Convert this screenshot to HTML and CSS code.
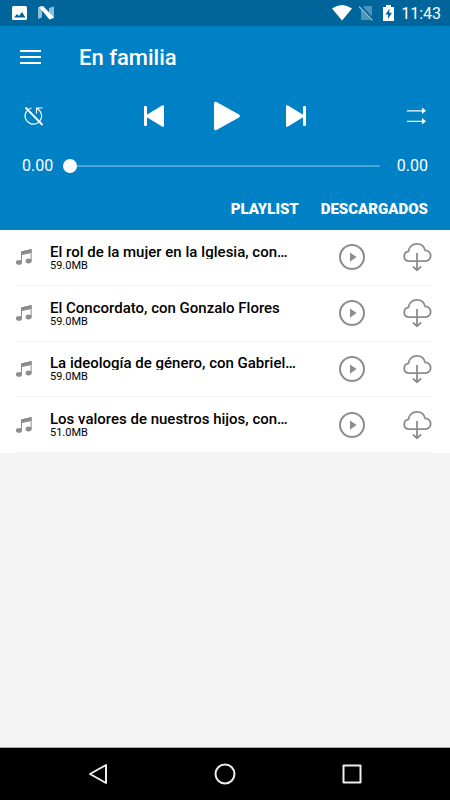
FILE: index.html
```html
<!DOCTYPE html>
<html lang="es">
<head>
<meta charset="utf-8">
<meta name="viewport" content="width=device-width, initial-scale=1">
<title>En familia</title>
<link rel="stylesheet" href="styles.css">
</head>
<body>
<svg class="sprite" aria-hidden="true">
  <symbol id="note" viewBox="0 0 16 16">
    <path d="M5 2.400 15.600 0v12.200h-1V4L6 5.900v7.300H5z"/>
    <path d="M5 2.400 15.600 0v3.800L5 6.100z"/>
    <ellipse cx="3" cy="13.400" rx="3" ry="2.300"/>
    <ellipse cx="12.600" cy="12" rx="3" ry="2.400"/>
  </symbol>
  <symbol id="play-circle" viewBox="0 0 26 26">
    <circle cx="13" cy="13" r="12" fill="none" stroke="currentColor" stroke-width="2"/>
    <path d="M11 8.500v9.200l6.500-4.600z"/>
  </symbol>
  <symbol id="cloud" viewBox="0 0 30 30">
    <g fill="none" stroke="currentColor" stroke-width="1.800">
      <path d="M6.500 19.200A5 5 0 0 1 6.500 9.300C7 5 10.500 1.800 14.800 1.800c4.200 0 7.400 2.700 8.300 6.600a5.400 5.400 0 0 1 .4 10.800z"/>
      <path d="M15 11v17M11 24.500l4 3.800 4-3.800"/>
    </g>
  </symbol>
</svg>
<div class="screen">
  <div class="status">
    <div class="status-group">
      <svg width="15" height="14" viewBox="0 0 15 14"><rect width="15" height="14" rx="1.500" fill="#fff"/><path d="M2 11.500 5 8l2 2 3-4 3.500 5.500z" fill="#00659b"/></svg>
      <svg width="17" height="14" viewBox="0 0 17 14"><path d="M1 1.500 5 0v11.500L1 13zM12 2l5-1.500V12l-5 1.500z" fill="#8fbdd6"/><path d="M2 1l4-1 11 11.500-4.500 2z" fill="#fff"/></svg>
    </div>
    <div class="status-group signals">
      <svg width="20" height="16" viewBox="0 0 20 16"><path d="M0 3.500Q10-3.500 20 3.500L10 15.500z" fill="#fff"/></svg>
      <svg width="15" height="16" viewBox="0 0 15 16"><path d="M5 1h8v14H2V4z" fill="#4c94ba"/><path d="M1 1l13 14" stroke="#00659b" stroke-width="3"/><path d="M0 1.500 13.500 15.500" stroke="#8fbdd6" stroke-width="1.300"/></svg>
      <svg width="13" height="16" viewBox="-2 0 13 16"><path d="M3 0h5v2h3v14H0V2h3z" fill="#fff"/><path d="M6.500 3.500 2.500 9.500H5V14l4-6.200H6.200z" fill="#00659b"/></svg>
      <span class="clock">11:43</span>
    </div>
  </div>
  <header class="player">
    <div class="titlebar">
      <button aria-label="Menú"><svg width="21" height="16" viewBox="0 0 21 16"><path d="M0 2h21M0 8h21M0 14h21" stroke="#fff" stroke-width="2"/></svg></button>
      <h1>En familia</h1>
    </div>
    <div class="controls">
      <button aria-label="Repetir"><svg width="20" height="20" viewBox="0 0 20 20" fill="none" stroke="#fff"><path d="M7.500 2A8.200 8.200 0 1 0 16 5.200L12.800 2M12.500 7.500V2h6" stroke-width="1.200"/><path d="M1.500 1.500l17 17.500" stroke-width="1.800"/></svg></button>
      <div class="transport">
        <button aria-label="Anterior"><svg width="20" height="22" viewBox="0 0 20 22" fill="#fff"><rect width="3" height="20" y="1" rx="1"/><path d="M2.500 10 18 .4Q20-.4 20 1.500v19q0 2-2 1.100L2.500 12z"/></svg></button>
        <button aria-label="Reproducir"><svg width="30" height="30" viewBox="-4 0 30 30" fill="#fff"><path d="M0 2.500Q0 0 2.500 1L25 13.500q1.800 1.500 0 3L2.500 29Q0 30 0 27.500z"/></svg></button>
        <button aria-label="Siguiente"><svg width="20" height="22" viewBox="0 0 20 22" fill="#fff"><rect x="17" y="1" width="3" height="20" rx="1"/><path d="M17.500 10 2 .4Q0-.4 0 1.500v19q0 2 2 1.100L17.500 12z"/></svg></button>
      </div>
      <button aria-label="Orden"><svg width="20" height="18" viewBox="0 0 20 18" fill="#fff"><path d="M1 3.200h15V.5L20 3.700l-4 3.200V4.400H1zM1 13.800h15v-2.700l4 3.200-4 3.200V15H1z"/></svg></button>
    </div>
    <div class="progress">
      <span>0.00</span>
      <input type="range" min="0" max="100" value="0" aria-label="Posición">
      <span>0.00</span>
    </div>
    <nav class="tabs">
      <button>PLAYLIST</button>
      <button>DESCARGADOS</button>
    </nav>
  </header>
  <main>
    <ul class="tracks">
      <li>
        <svg class="note"><use href="#note"/></svg>
        <div class="info"><div class="name">El rol de la mujer en la Iglesia, con…</div><div class="size">59.0MB</div></div>
        <button aria-label="Reproducir"><svg class="play"><use href="#play-circle"/></svg></button>
        <button aria-label="Descargar"><svg class="cloud"><use href="#cloud"/></svg></button>
      </li>
      <li>
        <svg class="note"><use href="#note"/></svg>
        <div class="info"><div class="name">El Concordato, con Gonzalo Flores</div><div class="size">59.0MB</div></div>
        <button aria-label="Reproducir"><svg class="play"><use href="#play-circle"/></svg></button>
        <button aria-label="Descargar"><svg class="cloud"><use href="#cloud"/></svg></button>
      </li>
      <li>
        <svg class="note"><use href="#note"/></svg>
        <div class="info"><div class="name">La ideología de género, con Gabriel…</div><div class="size">59.0MB</div></div>
        <button aria-label="Reproducir"><svg class="play"><use href="#play-circle"/></svg></button>
        <button aria-label="Descargar"><svg class="cloud"><use href="#cloud"/></svg></button>
      </li>
      <li>
        <svg class="note"><use href="#note"/></svg>
        <div class="info"><div class="name">Los valores de nuestros hijos, con…</div><div class="size">51.0MB</div></div>
        <button aria-label="Reproducir"><svg class="play"><use href="#play-circle"/></svg></button>
        <button aria-label="Descargar"><svg class="cloud"><use href="#cloud"/></svg></button>
      </li>
    </ul>
  </main>
  <nav class="system">
    <button aria-label="Atrás"><svg viewBox="0 0 22 22"><path d="M19 2v18L3 11z"/></svg></button>
    <button aria-label="Inicio"><svg viewBox="0 0 22 22"><circle cx="11" cy="11" r="9.500"/></svg></button>
    <button aria-label="Recientes"><svg viewBox="0 0 22 22"><rect x="2.500" y="2.500" width="17" height="17"/></svg></button>
  </nav>
</div>
</body>
</html>
```
FILE: styles.css
```css
* { box-sizing: border-box; }
body {
  margin: 0;
  font-family: Roboto, sans-serif;
  background: #f4f4f4;
  color: #000;
}
button {
  display: flex;
  padding: 0;
  border: 0;
  background: none;
  color: inherit;
  font: inherit;
}
svg { display: block; }
.sprite { position: absolute; width: 0; height: 0; }
.screen {
  display: flex;
  flex-direction: column;
  min-height: 100vh;
}
.status {
  display: flex;
  justify-content: space-between;
  align-items: center;
  height: 26px;
  padding: 0 9px 0 12px;
  background: #00659b;
  color: #fff;
}
.status-group { display: flex; align-items: center; gap: 10px; }
.signals { gap: 7px; }
.clock { font-size: 16px; line-height: 20px; padding-top: 2px; }
.player {
  padding: 0 22px;
  background: #0080c5;
  color: #fff;
}
.titlebar {
  display: flex;
  align-items: center;
  gap: 38px;
  height: 62px;
  margin-left: -2px;
}
h1 { margin: 0; padding-top: 2px; font-size: 22px; line-height: 28px; font-weight: 500; }
.controls {
  display: flex;
  justify-content: space-between;
  align-items: center;
  height: 56px;
  padding: 0 2px;
}
.transport { display: flex; align-items: center; gap: 46px; }
.progress {
  display: flex;
  align-items: center;
  height: 44px;
  font-size: 16px;
  line-height: 20px;
}
.progress input {
  flex: 1;
  min-width: 0;
  height: 14px;
  margin: 0 17px 0 10px;
  appearance: none;
  background: linear-gradient(#4aa4d6, #4aa4d6) center / 100% 2px no-repeat;
}
.progress input::-webkit-slider-thumb {
  appearance: none;
  width: 14px;
  height: 14px;
  border-radius: 50%;
  background: #fff;
}
.tabs {
  display: flex;
  justify-content: flex-end;
  align-items: center;
  gap: 22px;
  height: 42px;
  font-size: 15px;
  font-weight: 900;
}
main { flex: 1; }
.tracks {
  display: grid;
  grid-auto-rows: 1fr;
  min-height: 223px;
  margin: 0;
  padding: 0 18px 0 16px;
  list-style: none;
  background: #fff;
}
.tracks li {
  display: flex;
  align-items: center;
  border-bottom: 1px solid #f4f4f4;
}
.tracks svg { fill: currentColor; color: #8c8c8c; }
.note { width: 16px; height: 16px; }
.info { flex: 1; min-width: 0; margin: 0 16px 0 18px; }
.name {
  overflow: hidden;
  height: 16px;
  font-size: 15px;
  line-height: 18px;
  font-weight: 500;
  white-space: nowrap;
}
.size { font-size: 11px; line-height: 13px; }
.play { width: 26px; height: 26px; }
.cloud { width: 30px; height: 30px; margin-left: 37px; }
.system {
  display: flex;
  justify-content: space-around;
  align-items: center;
  height: 53px;
  padding: 0 35px;
  background: #000;
  border-top: 1px solid #aaa;
}
.system svg {
  width: 22px;
  height: 22px;
  fill: none;
  stroke: #eee;
  stroke-width: 2;
  stroke-linejoin: round;
}
```
